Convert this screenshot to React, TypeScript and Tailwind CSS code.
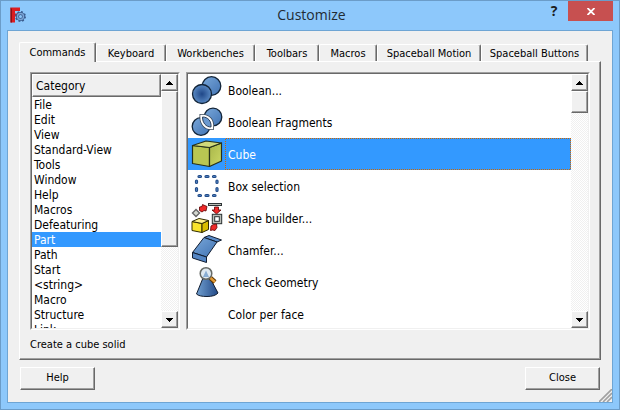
import type { ReactNode } from "react";

const raised =
  "border border-t-white border-l-white border-r-[#696969] border-b-[#696969] bg-[#f0f0f0] shadow-[inset_-1px_-1px_0_#a0a0a0]";

const tabs = [
  { label: "Commands", width: "w-[77px]" },
  { label: "Keyboard", width: "w-[70px]" },
  { label: "Workbenches", width: "w-[89px]" },
  { label: "Toolbars", width: "w-16" },
  { label: "Macros", width: "w-[58px]" },
  { label: "Spaceball Motion", width: "w-[104px]" },
  { label: "Spaceball Buttons", width: "w-[107px]" },
];

const categories = [
  "File", "Edit", "View", "Standard-View", "Tools", "Window", "Help", "Macros",
  "Defeaturing", "Part", "Path", "Start", "<string>", "Macro", "Structure", "Link",
];

function AppIcon() {
  return (
    <svg width="16" height="16" viewBox="0 0 16 16" aria-hidden="true">
      <path d="M0.5 0.5H10V4H5V6.5H8.5V9.5H5V15.5H0.5Z" fill="#dc1c22" />
      <path d="M0.5 0.5L2 2V15.5H0.5Z" fill="#8b1015" />
      <circle cx="10.5" cy="9.5" r="4.6" fill="none" stroke="#3a5c8f" strokeWidth="1.8" strokeDasharray="1.8 1.81" />
      <circle cx="10.5" cy="9.5" r="3" fill="none" stroke="#3a5c8f" strokeWidth="3" />
      <circle cx="10.5" cy="9.5" r="3" fill="none" stroke="#7ba4d4" strokeWidth="1.4" />
    </svg>
  );
}

function Icon({ children }: { children?: ReactNode }) {
  return (
    <svg width="32" height="32" viewBox="0 0 32 32" className="shrink-0" aria-hidden="true">
      {children}
    </svg>
  );
}

function Defs() {
  return (
    <svg width="0" height="0" className="absolute" aria-hidden="true">
      <defs>
        <linearGradient id="blue" x1="0" y1="0" x2="1" y2="1">
          <stop offset="0" stopColor="#7aa8da" />
          <stop offset="1" stopColor="#4173b3" />
        </linearGradient>
        <radialGradient id="ball">
          <stop offset="0" stopColor="#1f4788" />
          <stop offset="1" stopColor="#5a8ac4" />
        </radialGradient>
        <linearGradient id="cone" x1="0" y1="0" x2="1" y2="0">
          <stop offset="0" stopColor="#719fcf" />
          <stop offset="1" stopColor="#234a88" />
        </linearGradient>
        <linearGradient id="side" x1="0" y1="0" x2="1" y2="1">
          <stop offset="0" stopColor="#a8b64a" />
          <stop offset="1" stopColor="#cbd764" />
        </linearGradient>
      </defs>
    </svg>
  );
}

const redArrow = { fill: "#ef2929", stroke: "#5d0000", strokeWidth: 0.8 };

const commands: { label: string; icon: ReactNode }[] = [
  {
    label: "Boolean...",
    icon: (
      <Icon>
        <g stroke="#122438" strokeWidth="1.3">
          <circle cx="20.5" cy="12" r="9.3" fill="url(#blue)" />
          <circle cx="11" cy="20" r="9.5" fill="url(#ball)" />
        </g>
      </Icon>
    ),
  },
  {
    label: "Boolean Fragments",
    icon: (
      <Icon>
        <g stroke="#122438" strokeWidth="1.3">
          <circle cx="22" cy="11" r="8.8" fill="url(#blue)" />
          <circle cx="10" cy="20.5" r="8.8" fill="url(#blue)" />
        </g>
        <path d="M11.5 11C17 11 20.5 15 20 21C15 21 11.5 17 11.5 11Z" fill="none" stroke="#3c4a58" strokeWidth="6" />
        <path d="M11.5 11C17 11 20.5 15 20 21C15 21 11.5 17 11.5 11Z" fill="none" stroke="white" strokeWidth="4.4" />
        <path d="M11.5 11C17 11 20.5 15 20 21C15 21 11.5 17 11.5 11Z" fill="#6b99cf" stroke="#2d4058" />
      </Icon>
    ),
  },
  {
    label: "Cube",
    icon: (
      <Icon>
        <g stroke="#26301a" strokeWidth="1.2" strokeLinejoin="round">
          <path d="M1.5 7.5L18.5 9.5V28.5L1.5 25.5Z" fill="#b9c652" />
          <path d="M18.5 9.5L30.5 5V23L18.5 28.5Z" fill="url(#side)" />
          <path d="M1.5 7.5L18.5 9.5L30.5 5L15 3Z" fill="#d0d97a" />
        </g>
      </Icon>
    ),
  },
  {
    label: "Box selection",
    icon: (
      <Icon>
        <g stroke="#204a87" strokeWidth="3.2" strokeLinecap="round">
          <path d="M8 6.5H9.5M15 6.5H17M22.500 6.5H24M8 25.5H9.5M15 25.5H17M22.500 25.5H24" />
          <path d="M5.500 11V12.500M5.500 18.500V20.500M26 11V12.500M26 18.500V20.500" />
        </g>
        <g stroke="#5080bd" strokeWidth="1.2" strokeLinecap="round">
          <path d="M8 6.5H9.5M15 6.5H17M22.500 6.5H24M8 25.5H9.5M15 25.5H17M22.500 25.5H24" />
          <path d="M5.500 11V12.500M5.500 18.500V20.500M26 11V12.500M26 18.500V20.500" />
        </g>
      </Icon>
    ),
  },
  {
    label: "Shape builder...",
    icon: (
      <Icon>
        <path d="M5 7.5L8.5 11L5 14.500L1.5 11Z" fill="#d3d7cf" stroke="#666" strokeWidth="1.4" />
        <path d="M8.5 5L11 4.500L11.5 2.500L16 4.500L15 9L13 8.500L11 10L8.5 8.500Z" {...redArrow} />
        <path d="M17 2.500H31" stroke="#2e3436" strokeWidth="3" />
        <path d="M18 2.500H30" stroke="#babdb6" />
        <path d="M23.5 5H27.5V8H30L25.5 12L21 8H23.5Z" {...redArrow} />
        <rect x="22.5" y="13.5" width="7" height="7" fill="white" stroke="#2e3436" strokeWidth="3.4" />
        <rect x="22.5" y="13.5" width="7" height="7" fill="none" stroke="#babdb6" strokeWidth="1.4" />
        <path d="M20 24L22.5 22.5L25.5 22L26 25.5L24 28.5L21.5 28L19.5 28.5Z" {...redArrow} />
        <g stroke="#302b00" strokeLinejoin="round">
          <path d="M1 19.5L11 21.5V30.5L1 28.5Z" fill="#f8e32c" />
          <path d="M11 21.5L17.5 18.5V27.5L11 30.5Z" fill="#d8bd00" />
          <path d="M1 19.5L8 16.5L17.5 18.5L11 21.5Z" fill="#fdf08a" />
        </g>
      </Icon>
    ),
  },
  {
    label: "Chamfer...",
    icon: (
      <Icon>
        <g stroke="#101c30" strokeLinejoin="round">
          <path d="M13 3.5L18 1.5L30.5 6L26 8Z" fill="#5b8cc9" />
          <path d="M1.5 18.5L13 3.5L26 8L15.5 23Z" fill="url(#blue)" />
          <path d="M1.5 18.5V24L15.5 28.5V23Z" fill="#5385c4" />
        </g>
      </Icon>
    ),
  },
  {
    label: "Check Geometry",
    icon: (
      <Icon>
        <path d="M12 12H19L27 27Q24 30.5 16 30.5Q8 30.5 5.5 28Z" fill="url(#cone)" stroke="#101c30" />
        <circle cx="15" cy="7.5" r="5.8" fill="#dde8f0" stroke="#666a66" strokeWidth="1.5" />
        <path d="M12 11L15 4.5L18 11Z" fill="#88add3" />
        <path d="M19.5 12L24 16" stroke="#5c3500" strokeWidth="4.5" />
        <path d="M19.5 12L24 16" stroke="#e29a36" strokeWidth="2.4" />
      </Icon>
    ),
  },
  { label: "Color per face", icon: <Icon /> },
];

function ScrollBar({ thumb }: { thumb: string }) {
  return (
    <div className="flex w-[17px] shrink-0 flex-col bg-[repeating-conic-gradient(#f0f0f0_0_25%,white_0_50%)] bg-size-[2px_2px]">
      <button type="button" aria-label="Scroll up" className={`flex h-[17px] shrink-0 items-center justify-center ${raised}`}>
        <svg width="7" height="4" viewBox="0 0 7 4" shapeRendering="crispEdges" aria-hidden="true">
          <path d="M3 0H4V1H5V2H6V3H7V4H0V3H1V2H2V1H3Z" />
        </svg>
      </button>
      <div className={`${thumb} ${raised}`} />
      <button type="button" aria-label="Scroll down" className={`mt-auto flex h-[17px] shrink-0 items-center justify-center ${raised}`}>
        <svg width="7" height="4" viewBox="0 0 7 4" shapeRendering="crispEdges" aria-hidden="true">
          <path d="M0 0H7V1H6V2H5V3H4V4H3V3H2V2H1V1H0Z" />
        </svg>
      </button>
    </div>
  );
}

const sunken =
  "border border-t-[#a0a0a0] border-l-[#a0a0a0] border-r-white border-b-white";
const sunkenInner =
  "border border-t-[#696969] border-l-[#696969] border-r-[#f0f0f0] border-b-[#f0f0f0] bg-white";

export default function App() {
  return (
    <div className="flex h-screen flex-col border border-[#6b9cc8] bg-[#8dc8fb] px-1.5 pb-1.5 font-['DejaVu_Sans_Condensed','Noto_Sans',sans-serif] text-[11px] text-black">
      <Defs />
      <header className="flex h-[29px] shrink-0 items-start">
        <div className="flex flex-1 pt-1.5 pl-[3px]">
          <AppIcon />
        </div>
        <h1 className="pt-[3px] font-['Open_Sans',sans-serif] text-[14px] leading-[22px] text-[#222b33]">Customize</h1>
        <div className="flex flex-1 justify-end">
          <button type="button" aria-label="Help" className="h-5 w-7 font-['Open_Sans',sans-serif] text-[14px] leading-5 font-bold text-[#1c1c1c]">?</button>
          <button type="button" aria-label="Close window" className="flex h-5 w-[45px] items-center justify-center bg-[#c75050]">
            <svg width="8" height="7" viewBox="0 0 8 7" aria-hidden="true">
              <path d="M0.5 0L7.5 7M7.5 0L0.5 7" stroke="white" strokeWidth="1.8" />
            </svg>
          </button>
        </div>
      </header>

      <main className="relative flex min-h-0 flex-1 flex-col border border-[#6ea5d4] bg-[#f0f0f0] px-[11px] pt-[11px] pb-3">
        <div role="tablist" className="flex h-[19px] shrink-0 items-end">
          {tabs.map((tab, i) => (
            <button
              key={tab.label}
              type="button"
              role="tab"
              aria-selected={i === 0}
              className={`${tab.width} rounded-t-xs border-t border-l border-white border-r border-r-[#696969] shadow-[inset_-1px_0_0_#a0a0a0] ${i === 0 ? "relative z-10 -mb-px h-5" : "h-[17px] pt-0.5"} bg-[#f0f0f0] leading-[14px] whitespace-nowrap`}
            >
              {tab.label}
            </button>
          ))}
        </div>

        <section className={`flex min-h-0 flex-1 flex-col px-2.5 pt-2.5 ${raised}`}>
          <div className="flex min-h-0 flex-1 gap-1.5 text-[12px]">
            <div className={`flex w-[150px] shrink-0 ${sunken}`}>
              <div className={`flex min-w-0 flex-1 ${sunkenInner}`}>
                <div className="flex min-w-0 flex-1 flex-col">
                  <div id="category" className={`h-[23px] shrink-0 px-[3px] pt-px leading-5 ${raised}`}>Category</div>
                  <ul role="listbox" aria-labelledby="category" className="min-h-0 flex-1 overflow-hidden">
                    {categories.map((name) => (
                      <li key={name} role="option" aria-selected={name === "Part"} className="h-[15px] px-0.5 pt-px leading-[14px] aria-selected:bg-[#3399ff] aria-selected:text-white">
                        {name}
                      </li>
                    ))}
                  </ul>
                </div>
                <ScrollBar thumb="h-[156px]" />
              </div>
            </div>
            <div className={`flex min-w-0 flex-1 ${sunken}`}>
              <div className={`flex min-w-0 flex-1 ${sunkenInner}`}>
                <ul role="listbox" aria-label="Commands" className="min-w-0 flex-1 overflow-hidden">
                  {commands.map(({ label, icon }) => (
                    <li key={label} role="option" aria-selected={label === "Cube"} className="group flex h-8 gap-0.5 pl-[3px] aria-selected:bg-[#3399ff] aria-selected:text-white">
                      {icon}
                      <span className="flex flex-1 bg-size-[2px_2px] p-px group-aria-selected:bg-[repeating-conic-gradient(#cc6600_0_25%,#3399ff_0_50%)]">
                        <span className="flex flex-1 items-center pt-0.5 pl-0.5 group-aria-selected:bg-[#3399ff]">{label}</span>
                      </span>
                    </li>
                  ))}
                </ul>
                <ScrollBar thumb="h-[22px]" />
              </div>
            </div>
          </div>
          <p className="h-[29px] shrink-0 leading-[29px]">Create a cube solid</p>
        </section>

        <div className="mt-[7px] flex shrink-0 justify-between px-px">
          <button type="button" className={`h-[23px] w-[75px] ${raised}`}>Help</button>
          <button type="button" className={`h-[23px] w-[75px] ${raised}`}>Close</button>
        </div>
        <svg width="13" height="13" viewBox="0 0 13 13" className="absolute right-0 bottom-0" aria-hidden="true">
          <path d="M0 13L13 0M4 13L13 4M8 13L13 8" stroke="#a0a0a0" strokeWidth="1.6" />
        </svg>
      </main>
    </div>
  );
}
